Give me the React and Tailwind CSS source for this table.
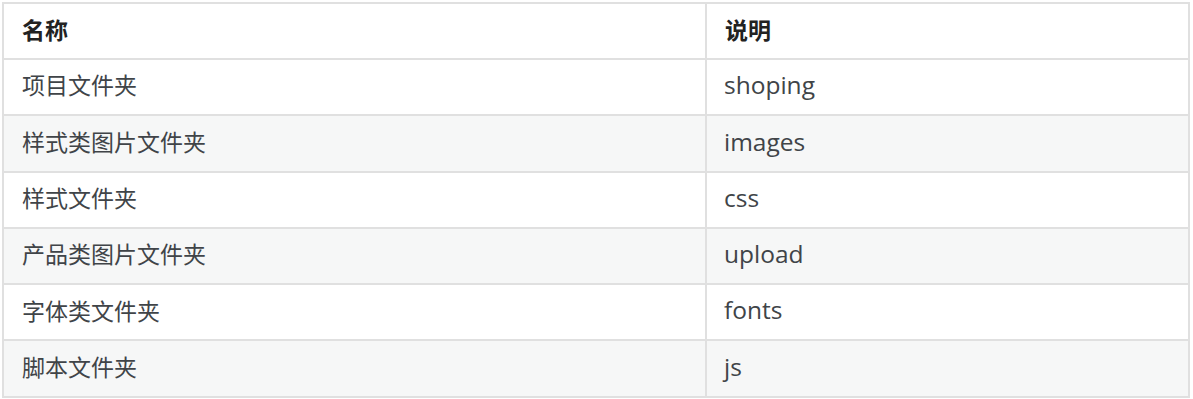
const rows = [
  ["项目文件夹", "shoping"],
  ["样式类图片文件夹", "images"],
  ["样式文件夹", "css"],
  ["产品类图片文件夹", "upload"],
  ["字体类文件夹", "fonts"],
  ["脚本文件夹", "js"],
];

export default function App() {
  return (
    <div className="w-[1193px] h-[399px] bg-white pl-[2px] pt-[2px] font-['Open_Sans','Noto_Sans_CJK_SC',sans-serif] text-[23px] text-[#404448]">
      <table className="w-[1188px] border-collapse table-fixed">
        <colgroup>
          <col className="w-[703px]" />
          <col />
        </colgroup>
        <thead>
          <tr className="h-[56px] bg-white">
            <th className="border-2 border-[#e0e0e0] pl-[18px] pb-[2px] text-left font-bold text-[#222]">名称</th>
            <th className="border-2 border-[#e0e0e0] pl-[18px] pb-[2px] text-left font-bold text-[#222]">说明</th>
          </tr>
        </thead>
        <tbody>
          {rows.map(([name, desc], i) => (
            <tr key={name} className={i % 2 === 1 ? "h-[56.3px] bg-[#f6f7f7]" : "h-[56.3px] bg-white"}>
              <td className="border-2 border-[#e0e0e0] pl-[18px] pb-[3px]">{name}</td>
              <td className="border-2 border-[#e0e0e0] pl-[17px] pb-[3px] text-[24.5px]">{desc}</td>
            </tr>
          ))}
        </tbody>
      </table>
    </div>
  );
}
